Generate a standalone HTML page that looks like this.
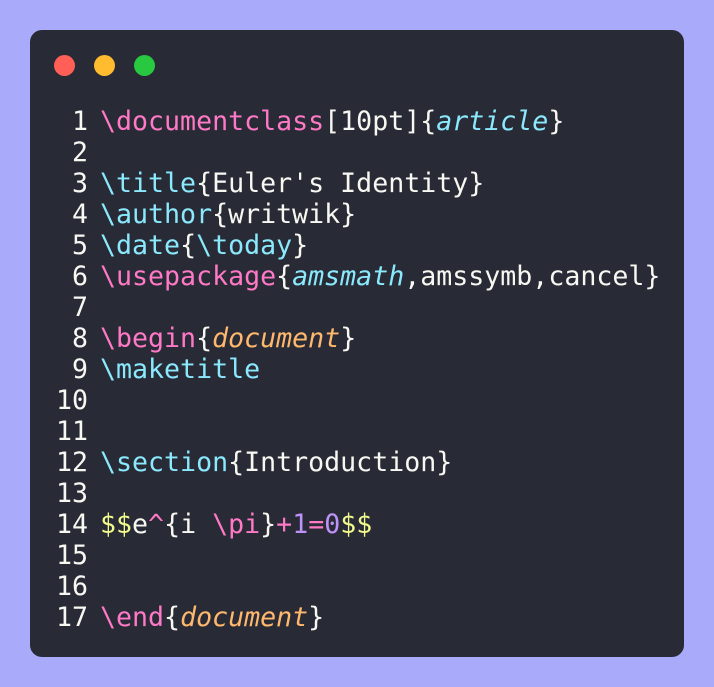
<!DOCTYPE html>
<html><head><meta charset="utf-8"><style>
html,body{margin:0;padding:0}
body{width:714px;height:687px;background:#a9aaf9;position:relative;overflow:hidden}
.win{position:absolute;left:30px;top:30px;width:654px;height:627px;background:#282a36;border-radius:12px}
.dot{position:absolute;top:25px;width:21px;height:21px;border-radius:50%}
pre{position:absolute;left:0;top:76px;margin:0;font-family:"DejaVu Sans Mono","Liberation Mono",monospace;font-size:26.6px;line-height:31px;color:#f8f8f2}
.n{display:inline-block;width:58px;text-align:right;margin-right:12px;color:#f8f8f2}
.p{color:#ff79c6}.c{color:#8be9fd}.ci{color:#8be9fd;font-style:italic}.o{color:#ffb86c;font-style:italic}.y{color:#f1fa8c}.v{color:#bd93f9}
</style></head><body>
<div class="win">
<div class="dot" style="left:24px;background:#ff5f57"></div>
<div class="dot" style="left:64px;background:#febc2e"></div>
<div class="dot" style="left:104px;background:#28c840"></div>
<pre><span class="n">1</span><span class="p">\documentclass</span>[10pt]{<span class="ci">article</span>}
<span class="n">2</span>
<span class="n">3</span><span class="c">\title</span>{Euler's Identity}
<span class="n">4</span><span class="c">\author</span>{writwik}
<span class="n">5</span><span class="c">\date</span>{<span class="c">\today</span>}
<span class="n">6</span><span class="p">\usepackage</span>{<span class="ci">amsmath</span>,amssymb,cancel}
<span class="n">7</span>
<span class="n">8</span><span class="p">\begin</span>{<span class="o">document</span>}
<span class="n">9</span><span class="c">\maketitle</span>
<span class="n">10</span>
<span class="n">11</span>
<span class="n">12</span><span class="c">\section</span>{Introduction}
<span class="n">13</span>
<span class="n">14</span><span class="y">$$</span>e<span class="p">^</span>{i <span class="p">\pi</span>}<span class="p">+</span><span class="v">1</span><span class="p">=</span><span class="v">0</span><span class="y">$$</span>
<span class="n">15</span>
<span class="n">16</span>
<span class="n">17</span><span class="p">\end</span>{<span class="o">document</span>}</pre>
</div>
</body></html>
